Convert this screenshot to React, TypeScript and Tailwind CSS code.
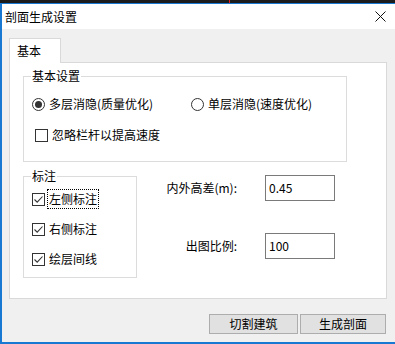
import React from 'react';

const font = { fontFamily: '"Noto Sans CJK SC", "Noto Sans", sans-serif' };

function Radio({ checked, label }: { checked?: boolean; label: string }) {
  return (
    <div className="flex items-center gap-[4px]">
      <span className="flex h-[13px] w-[13px] items-center justify-center rounded-full border border-[#333333] bg-white">
        {checked && <span className="h-[7px] w-[7px] rounded-full bg-[#333333]" />}
      </span>
      <span className="text-[12px] leading-[14px] text-black">{label}</span>
    </div>
  );
}

function Check({ checked, label, focus }: { checked?: boolean; label: string; focus?: boolean }) {
  return (
    <div className="flex items-center gap-[2px]">
      <span className="flex h-[13px] w-[13px] items-center justify-center border border-[#333333] bg-white">
        {checked && (
          <svg width="11" height="11" viewBox="0 0 11 11">
            <path d="M1.5 5.5 L4.2 8.2 L9.5 2.5" fill="none" stroke="#333333" strokeWidth="1.1" />
          </svg>
        )}
      </span>
      <span
        className={
          'px-[1px] py-[2px] text-[12px] leading-[14px] text-black ' +
          (focus ? 'border border-dotted border-black' : 'border border-transparent')
        }
      >
        {label}
      </span>
    </div>
  );
}

function Group({ title, className, children }: { title: string; className: string; children: React.ReactNode }) {
  return (
    <div className={'relative border border-[#dcdcdc] ' + className}>
      <span className="absolute left-[7px] top-[-8px] bg-white px-[1px] text-[12px] leading-[14px] text-black">
        {title}
      </span>
      {children}
    </div>
  );
}

export default function App() {
  return (
    <div className="relative h-[344px] w-[395px] overflow-hidden bg-[#f0f0f0]" style={font}>
      {/* desktop strip above the window */}
      <div className="relative h-[3px] bg-[#1c1c1c]">
        <div className="absolute left-[229px] top-0 h-[3px] w-px bg-[#e02020]" />
      </div>
      <div className="h-px bg-[#1979d2]" />

      <div className="flex h-[340px] flex-col border-l-2 border-[#1979d2]">
        {/* title bar */}
        <div className="flex h-[25px] items-center justify-between bg-white pl-[3px] pr-[9px]">
          <span className="text-[12px] leading-[14px] text-black">剖面生成设置</span>
          <svg width="11" height="11" viewBox="0 0 11 11">
            <path d="M0.5 0.5 L10.5 10.5 M10.5 0.5 L0.5 10.5" stroke="#111111" strokeWidth="1" />
          </svg>
        </div>

        {/* tab */}
        <div className="relative z-10 mb-[-1px] ml-[7px] mt-[9px] flex h-[25px] w-[52px] items-start border border-b-0 border-[#d9d9d9] bg-white pl-[7px] pt-[5px]">
          <span className="text-[12px] leading-[14px] text-black">基本</span>
        </div>

        {/* tab panel */}
        <div className="ml-[7px] h-[237px] w-[378px] border border-[#d9d9d9] bg-white pl-[13px] pt-[13px]">
          <Group title="基本设置" className="h-[86px] w-[324px]">
            <div className="flex items-center pl-[8px] pt-[20px]">
              <div className="w-[159px]">
                <Radio checked label="多层消隐(质量优化)" />
              </div>
              <Radio label="单层消隐(速度优化)" />
            </div>
            <div className="pl-[11px] pt-[14px]">
              <Check label="忽略栏杆以提高速度" />
            </div>
          </Group>

          <div className="mt-[14px] flex">
            <Group title="标注" className="h-[102px] w-[114px]">
              <div className="flex flex-col gap-[10px] pl-[8px] pt-[12px]">
                <Check checked focus label="左侧标注" />
                <Check checked label="右侧标注" />
                <Check checked label="绘层间线" />
              </div>
            </Group>

            <div className="ml-[28px] mt-[-1px] grid grid-cols-[72px_70px] gap-x-[28px] gap-y-[12px]">
              <div className="flex h-[26px] items-center justify-end whitespace-nowrap text-[12px] leading-[14px] text-black">
                内外高差(m):
              </div>
              <div className="flex h-[26px] items-center border border-[#7a7a7a] bg-white pl-[3px] text-[12px] leading-[14px] text-black">
                0.45
              </div>
              <div className="flex h-[26px] items-center justify-end whitespace-nowrap text-[12px] leading-[14px] text-black">
                出图比例:
              </div>
              <div className="flex h-[26px] items-center border border-[#7a7a7a] bg-white pl-[3px] text-[12px] leading-[14px] text-black">
                100
              </div>
            </div>
          </div>
        </div>

        {/* buttons */}
        <div className="mt-[15px] flex justify-end gap-[2px] pr-[9px]">
          <button className="flex h-[20px] w-[89px] items-center justify-center border border-[#adadad] bg-[#e1e1e1] text-[12px] leading-[14px] text-black">
            切割建筑
          </button>
          <button className="flex h-[20px] w-[86px] items-center justify-center border border-[#adadad] bg-[#e1e1e1] text-[12px] leading-[14px] text-black">
            生成剖面
          </button>
        </div>
      </div>

      <div className="absolute bottom-0 left-0 h-[2px] w-full bg-[#1979d2]" />
    </div>
  );
}
